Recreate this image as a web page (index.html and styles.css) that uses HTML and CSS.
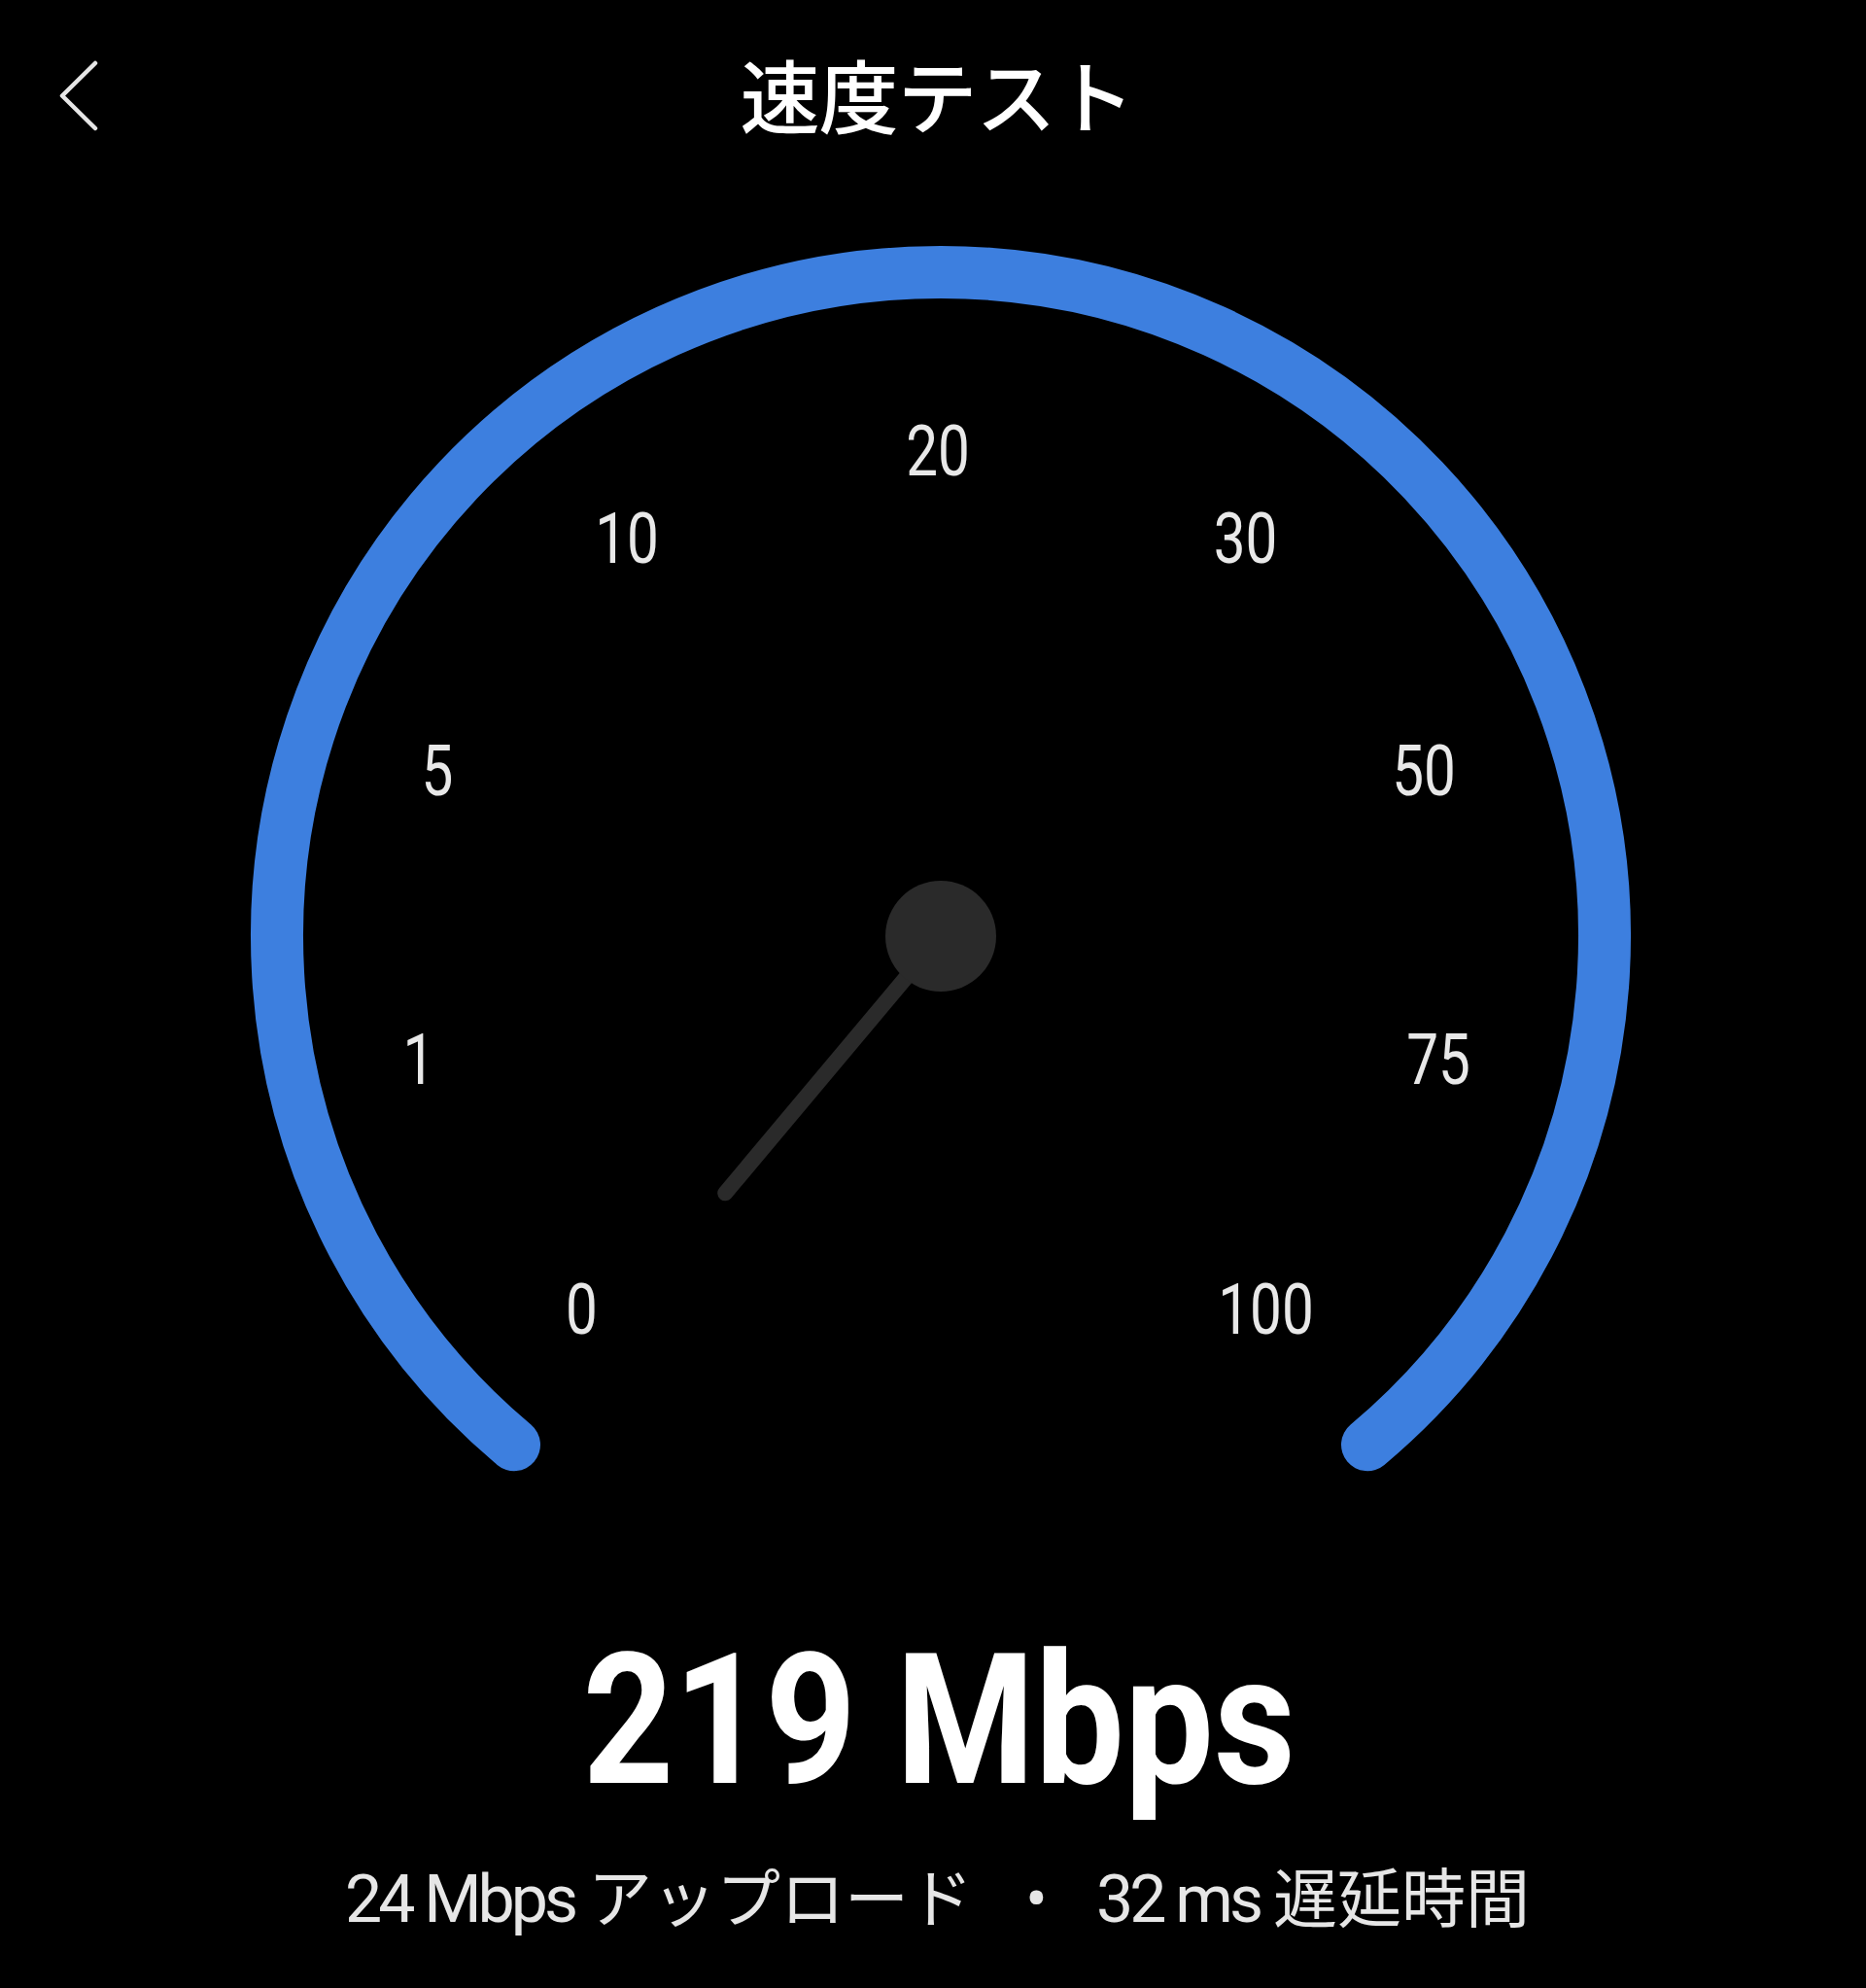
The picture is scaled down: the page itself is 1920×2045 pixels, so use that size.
FILE: index.html
```html
<!DOCTYPE html>
<html lang="ja">
<head>
<meta charset="utf-8">
<title>速度テスト</title>
<link rel="stylesheet" href="styles.css">
</head>
<body>
<div class="screen">
  <header class="topbar">
    <button class="back" aria-label="戻る">
      <svg class="back-icon" width="44" height="75" viewBox="0 0 44 75">
        <polyline points="38,3 4,36.5 38,70" />
      </svg>
    </button>
    <h1 class="title">速度テスト</h1>
    <div class="spacer"></div>
  </header>

  <svg class="gauge" width="1920" height="1485" viewBox="0 192 1920 1485">
    <path class="gauge-arc" d="M 529 1486.2 A 683 683 0 1 1 1407 1486.2" />
    <line class="needle" x1="968" y1="963" x2="746.2" y2="1227.3" />
    <circle class="hub" cx="968" cy="963" r="57" />
    <g class="ticks">
      <text transform="translate(598.5 1372) scale(0.8 1)">0</text>
      <text transform="translate(431 1115) scale(0.8 1)">1</text>
      <text transform="translate(450 818) scale(0.8 1)">5</text>
      <text transform="translate(645 579) scale(0.8 1)">10</text>
      <text transform="translate(965 489) scale(0.8 1)">20</text>
      <text transform="translate(1281.5 579) scale(0.8 1)">30</text>
      <text transform="translate(1465 818) scale(0.8 1)">50</text>
      <text transform="translate(1480 1115) scale(0.8 1)">75</text>
      <text transform="translate(1302.5 1372) scale(0.8 1)">100</text>
    </g>
  </svg>

  <div class="result">
    <span class="speed">219 Mbps</span>
  </div>

  <div class="stats">
    <span class="lat">24 Mbps</span>
    <span class="jp jp-first">アップロード</span>
    <span class="dot">•</span>
    <span class="lat">32 ms</span>
    <span class="jp jp-second">遅延時間</span>
  </div>
</div>
</body>
</html>
```

FILE: styles.css
```css
html, body {
  margin: 0;
  padding: 0;
  background: #000;
}

.screen {
  width: 1920px;
  min-height: 2045px;
  background: #000;
  color: #fff;
  overflow: hidden;
}

.topbar {
  height: 192px;
  display: grid;
  grid-template-columns: 1fr auto 1fr;
  align-items: center;
}

.back {
  justify-self: start;
  margin: 7px 0 0 60px;
  padding: 0;
  border: 0;
  background: none;
  display: flex;
}

.back-icon polyline {
  fill: none;
  stroke: #e6e6e6;
  stroke-width: 4.5;
  stroke-linecap: round;
  stroke-linejoin: round;
}

.title {
  margin: 0 0 0 8px;
  font-family: "Noto Sans CJK JP", "Noto Sans", sans-serif;
  font-weight: 500;
  font-size: 82px;
  line-height: 1;
  color: #fff;
  letter-spacing: -1px;
}

.gauge {
  display: block;
}

.gauge-arc {
  fill: none;
  stroke: #3d7fdf;
  stroke-width: 54;
  stroke-linecap: round;
}

.needle {
  stroke: #2a2a2a;
  stroke-width: 16;
  stroke-linecap: round;
}

.hub {
  fill: #2a2a2a;
}

.ticks text {
  font-family: Roboto, "Liberation Sans", sans-serif;
  font-size: 73px;
  font-weight: 400;
  fill: #e8e8e8;
  text-anchor: middle;
}

.result {
  text-align: center;
  padding-left: 12px;
  line-height: 1;
  height: 187px;
}

.speed {
  display: inline-block;
  font-family: Roboto, "Liberation Sans", sans-serif;
  font-weight: 700;
  font-size: 187px;
  line-height: 1;
  color: #fff;
  transform: scaleX(0.875);
  transform-origin: center;
}

.stats {
  margin-top: 51px;
  display: flex;
  justify-content: center;
  align-items: baseline;
  padding-left: 9px;
  font-family: "Noto Sans CJK JP", "Noto Sans", sans-serif;
  font-size: 66px;
  line-height: 1;
  color: #e6e6e6;
}

.lat {
  font-family: Roboto, "Liberation Sans", sans-serif;
  font-size: 68px;
  letter-spacing: -4px;
  line-height: 1;
}

.jp-first {
  margin-left: 14px;
}

.jp-second {
  margin-left: 14px;
}

.dot {
  font-family: Roboto, "Liberation Sans", sans-serif;
  font-size: 68px;
  margin: 0 50px 0 54px;
}
```
